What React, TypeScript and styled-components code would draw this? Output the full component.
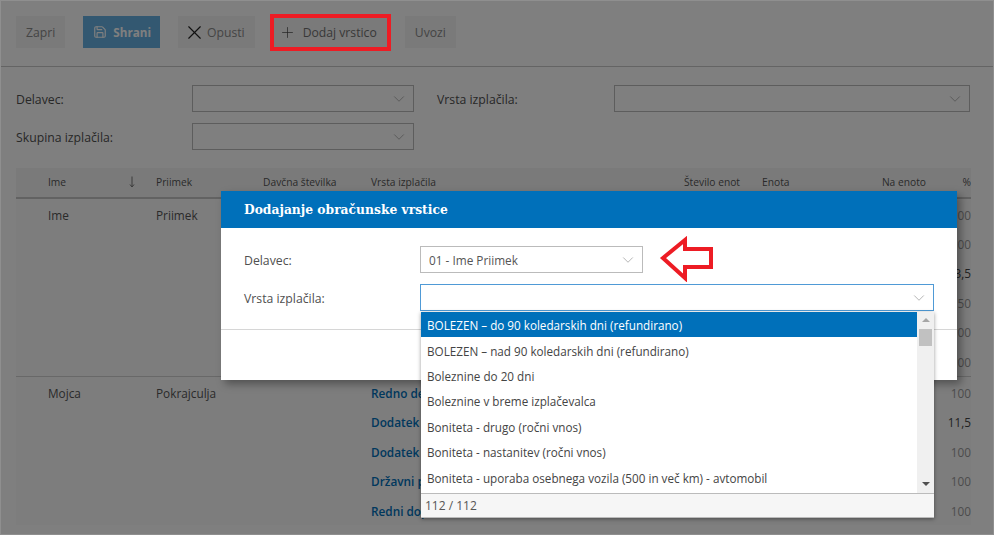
import styled, { createGlobalStyle } from 'styled-components';
import { ChevronDown, Plus, Save, X } from 'lucide-react';

const GlobalStyle = createGlobalStyle`
	html,
	body {
		margin: 0;
		height: 100%;
		overflow: hidden;
		background: #fff;
	}

	* {
		box-sizing: border-box;
	}

	#root {
		height: 100%;
	}
`;

const listItems = [
	'BOLEZEN – do 90 koledarskih dni (refundirano)',
	'BOLEZEN – nad 90 koledarskih dni (refundirano)',
	'Boleznine do 20 dni',
	'Boleznine v breme izplačevalca',
	'Boniteta - drugo (ročni vnos)',
	'Boniteta - nastanitev (ročni vnos)',
	'Boniteta - uporaba osebnega vozila (500 in več km) - avtomobil',
];

const groups = [
	{
		name: 'Ime',
		surname: 'Priimek',
		rows: [
			{ type: 'Redno delo', percent: '100' },
			{ type: 'Dodatek za delo', percent: '100' },
			{ type: 'Dodatek za malico', percent: '13,5', dark: true },
			{ type: 'Državni praznik', percent: '150' },
			{ type: 'Redni dopust', percent: '100' },
			{ type: 'Boleznine', percent: '100' },
		],
	},
	{
		name: 'Mojca',
		surname: 'Pokrajculja',
		rows: [
			{ type: 'Redno delo', percent: '100' },
			{ type: 'Dodatek za delo', percent: '11,5', dark: true },
			{ type: 'Dodatek za malico', percent: '100' },
			{ type: 'Državni praznik', percent: '100' },
			{ type: 'Redni dopust', percent: '100' },
		],
	},
];

function SelectArrow() {
	return (
		<ArrowSlot>
			<ChevronDown size={18} strokeWidth={1.3} color='#b4b4b4' />
		</ArrowSlot>
	);
}

function App() {
	return (
		<Page>
			<GlobalStyle />
			<Toolbar>
				<Button>Zapri</Button>
				<Button $primary>
					<Save size={14} strokeWidth={2} />
					Shrani
				</Button>
				<Button>
					<IconSlot $width={13}>
						<X size={23} strokeWidth={1.2} color='#222' />
					</IconSlot>
					Opusti
				</Button>
				<Button $marked>
					<IconSlot $width={10}>
						<Plus size={17} strokeWidth={1} color='#222' />
					</IconSlot>
					Dodaj vrstico
				</Button>
				<Button>Uvozi</Button>
			</Toolbar>

			<Filters>
				<Label>Delavec:</Label>
				<Select>
					<SelectArrow />
				</Select>
				<Label $indent>Vrsta izplačila:</Label>
				<Select>
					<SelectArrow />
				</Select>
				<Label>Skupina izplačila:</Label>
				<Select>
					<SelectArrow />
				</Select>
			</Filters>

			<Table>
				<HeaderRow>
					<span />
					<span>Ime</span>
					<SortIcon viewBox='0 0 6 12'>
						<path d='M3 0.5V11M1 8.5L3 11L5 8.5' fill='none' stroke='#777' strokeWidth='1' />
					</SortIcon>
					<span>Priimek</span>
					<span>Davčna številka</span>
					<span>Vrsta izplačila</span>
					<span>Število enot</span>
					<HeaderEnd>
						<span>Enota</span>
						<span>Na enoto</span>
					</HeaderEnd>
					<Right>%</Right>
				</HeaderRow>
				{groups.map((group) => (
					<Group key={group.name}>
						{group.rows.map((row, index) => (
							<Row key={index}>
								<span />
								<span>{index === 0 ? group.name : ''}</span>
								<span />
								<span>{index === 0 ? group.surname : ''}</span>
								<span />
								<TypeCell>
									<TypeLink>{row.type}</TypeLink>
								</TypeCell>
								<span />
								<span />
								<Percent $dark={row.dark}>{row.percent}</Percent>
							</Row>
						))}
					</Group>
				))}
			</Table>

			<Overlay />

			<Modal>
				<ModalTitle>Dodajanje obračunske vrstice</ModalTitle>
				<ModalBody>
					<Label>Delavec:</Label>
					<ModalSelect>
						<span>01 - Ime Priimek</span>
						<SelectArrow />
					</ModalSelect>
					<Label>Vrsta izplačila:</Label>
					<ComboField>
						<ModalSelect $focused>
							<span />
							<SelectArrow />
						</ModalSelect>
						<Dropdown>
							<ListArea>
								<List>
									{listItems.map((item, index) => (
										<ListItem key={item} $active={index === 0}>
											{item}
										</ListItem>
									))}
								</List>
								<Scrollbar>
									<ScrollUp />
									<ScrollThumb />
									<ScrollDown />
								</Scrollbar>
							</ListArea>
							<DropdownFooter>112 / 112</DropdownFooter>
						</Dropdown>
					</ComboField>
				</ModalBody>
				<ModalFooter />
			</Modal>

			<Arrow viewBox='0 0 56 46'>
				<polygon
					points='4,22 26,4 26,13 52,13 52,31 26,31 26,42'
					fill='none'
					stroke='#ed1c24'
					strokeWidth='4'
				/>
			</Arrow>
		</Page>
	);
}

const Page = styled.div`
	position: relative;
	height: 535px;
	overflow: hidden;
	font-family: 'Open Sans', sans-serif;
	font-size: 12px;
	color: #555;
`;

const Toolbar = styled.div`
	display: flex;
	gap: 18px;
	height: 67px;
	padding: 16px 16px 0;
	border-bottom: 1px solid #c8c8c8;
`;

const Button = styled.div<{ $primary?: boolean; $marked?: boolean }>`
	position: relative;
	z-index: ${(p) => (p.$marked ? 3 : 'auto')};
	display: flex;
	align-items: center;
	gap: ${(p) => (p.$marked ? '10px' : '6px')};
	height: 32px;
	padding: ${(p) => (p.$primary ? '0 9px 0 10px' : '0 10px')};
	background: ${(p) => (p.$primary ? '#66b0e2' : '#f4f4f4')};
	color: ${(p) => (p.$primary ? '#fff' : '#8a8a8a')};
	font-size: ${(p) => (p.$primary ? '11.7px' : '12.2px')};
	font-weight: ${(p) => (p.$primary ? 700 : 400)};

	${(p) =>
		p.$marked &&
		`
		background: #7a7a7a;
		color: #383838;

		&::after {
			content: '';
			position: absolute;
			inset: -2px -4px -3px -3px;
			border: 4px solid #ed1c24;
		}
	`}
`;

const IconSlot = styled.span<{ $width: number }>`
	display: flex;
	justify-content: center;
	width: ${(p) => p.$width}px;

	svg {
		flex-shrink: 0;
	}
`;

const Filters = styled.div`
	display: grid;
	grid-template-columns: 176px 222px 200px 356px;
	grid-auto-rows: 27px;
	row-gap: 11px;
	align-items: center;
	padding: 18px 16px;
`;

const Label = styled.div<{ $indent?: boolean }>`
	padding-top: 1px;
	padding-left: ${(p) => (p.$indent ? '23px' : '0')};
	font-size: 12.25px;
	color: #505050;
`;

const Select = styled.div`
	display: flex;
	align-items: center;
	justify-content: flex-end;
	height: 27px;
	padding: 0 7px 0 10px;
	border: 1px solid #bbb;
	background: #fff;
`;

const ArrowSlot = styled.span`
	display: flex;
	justify-content: center;
	width: 14px;

	svg {
		flex-shrink: 0;
	}
`;

const Table = styled.div`
	margin-left: 16px;
	width: 955px;
	background: #fbfbfb;
`;

const columns = '32px 83px 25px 107px 108px 313px 78px 168px 41px';

const HeaderRow = styled.div`
	display: grid;
	grid-template-columns: ${columns};
	align-items: center;
	height: 31px;
	padding-bottom: 2px;
	border-bottom: 2px solid #c4c4c4;
	background: #f5f5f5;
	font-size: 10.25px;
	color: #555;
`;

const SortIcon = styled.svg`
	width: 6px;
	height: 12px;
	margin-left: -2px;
`;

const HeaderEnd = styled.div`
	display: flex;
	justify-content: space-between;
	padding-right: 4px;
`;

const Right = styled.span`
	text-align: right;
`;

const Group = styled.div`
	padding-top: 1px;
	border-bottom: 1px solid #d0d0d0;

	&:last-child {
		border-bottom: none;
	}
`;

const Row = styled.div`
	display: grid;
	grid-template-columns: ${columns};
	align-items: center;
	height: 29.4px;
	font-size: 11.8px;
`;

const TypeCell = styled.span`
	overflow: hidden;
	white-space: nowrap;
`;

const TypeLink = styled.span`
	color: #0070ba;
	font-weight: 600;
`;

const Percent = styled.span<{ $dark?: boolean }>`
	text-align: right;
	color: ${(p) => (p.$dark ? '#444' : '#999')};
`;

const Overlay = styled.div`
	position: absolute;
	inset: 0;
	z-index: 2;
	border: 1px solid #8f8f8f;
	background: rgba(0, 0, 0, 0.5);
`;

const Modal = styled.div`
	position: absolute;
	top: 191px;
	left: 221px;
	z-index: 4;
	width: 736px;
	background: #fff;
	box-shadow: 4px 4px 8px rgba(0, 0, 0, 0.35);
`;

const ModalTitle = styled.div`
	display: flex;
	align-items: center;
	height: 37px;
	padding-left: 23px;
	background: #0070ba;
	color: #fff;
	font-family: 'DejaVu Serif', serif;
	font-size: 12.3px;
	font-weight: 700;
`;

const ModalBody = styled.div`
	display: grid;
	grid-template-columns: 176px 514px;
	grid-auto-rows: 27px;
	row-gap: 11px;
	align-items: center;
	padding: 18px 23px;
	border-bottom: 1px solid #d6d6d6;
`;

const ModalSelect = styled.div<{ $focused?: boolean }>`
	display: flex;
	align-items: center;
	justify-content: space-between;
	width: ${(p) => (p.$focused ? '514px' : '223px')};
	height: 27px;
	padding: 1px 7px 0 8px;
	border: 1px solid ${(p) => (p.$focused ? '#4f9ad6' : '#bbb')};
	font-size: 11.8px;
	color: #555;
`;

const ComboField = styled.div`
	position: relative;
`;

const Dropdown = styled.div`
	position: absolute;
	top: 28px;
	left: 1px;
	width: 513px;
	background: #fff;
	border-bottom: 1px solid #bbb;
	box-shadow: 0 1px 4px rgba(0, 0, 0, 0.4);
`;

const ListArea = styled.div`
	display: flex;
	height: 181px;
`;

const List = styled.div`
	flex: 1;
`;

const ListItem = styled.div<{ $active?: boolean }>`
	display: flex;
	align-items: center;
	height: 25.4px;
	padding: 1px 0 0 6px;
	background: ${(p) => (p.$active ? '#0070ba' : 'transparent')};
	font-size: 11.7px;
	color: ${(p) => (p.$active ? '#fff' : '#444')};
`;

const Scrollbar = styled.div`
	display: flex;
	flex-direction: column;
	align-items: center;
	width: 17px;
	padding: 6px 2px;
	background: #f0f0f0;
`;

const ScrollUp = styled.div`
	width: 0;
	height: 0;
	border-left: 4px solid transparent;
	border-right: 4px solid transparent;
	border-bottom: 4px solid #a6a6a6;
`;

const ScrollThumb = styled.div`
	width: 13px;
	height: 17px;
	margin-top: 7px;
	background: #c1c1c1;
`;

const ScrollDown = styled.div`
	width: 0;
	height: 0;
	margin-top: auto;
	margin-bottom: 1px;
	border-left: 4px solid transparent;
	border-right: 4px solid transparent;
	border-top: 4px solid #505050;
`;

const DropdownFooter = styled.div`
	display: flex;
	align-items: center;
	height: 24px;
	padding-left: 4px;
	border-top: 1px solid #bbb;
	background: #f6f6f6;
	color: #555;
`;

const ModalFooter = styled.div`
	height: 50px;
`;

const Arrow = styled.svg`
	position: absolute;
	top: 236px;
	left: 659px;
	z-index: 4;
	width: 56px;
	height: 46px;
`;

export default App;
